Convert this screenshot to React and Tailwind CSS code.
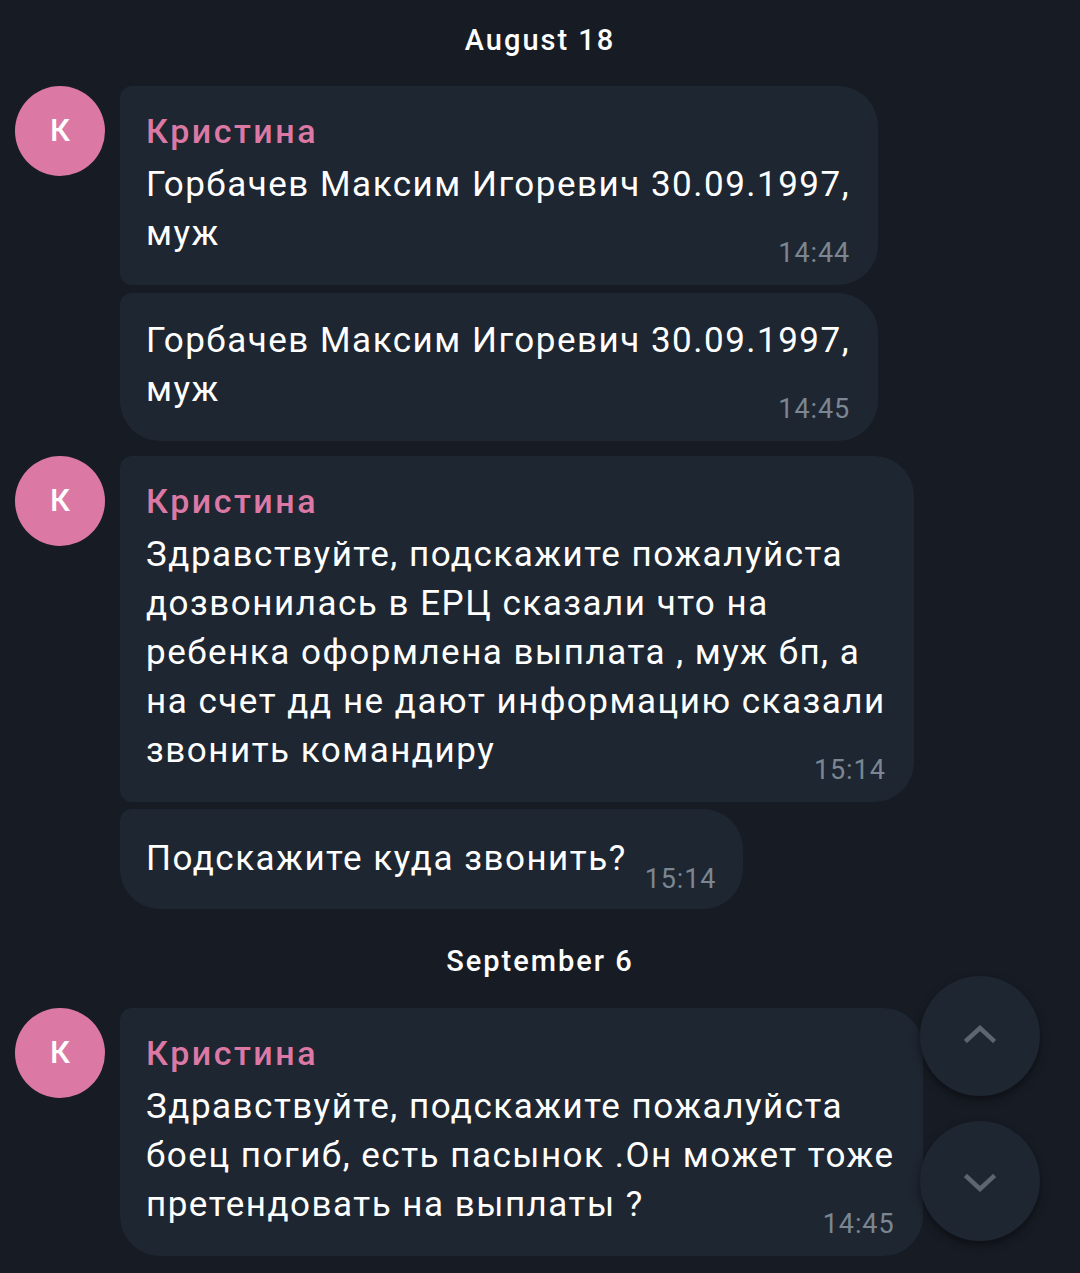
import React from 'react';

const DateLabel = ({ children, className = '' }) => (
  <div className={`flex justify-center text-[29px] tracking-[2px] font-medium text-white leading-[40px] ${className}`}>
    {children}
  </div>
);

const Avatar = () => (
  <div className="w-[90px] h-[90px] rounded-full bg-[#db79a4] flex items-center justify-center text-white text-[31px] font-medium shrink-0">
    К
  </div>
);

const Time = ({ children }) => (
  <span className="text-[27px] tracking-[0.9px] leading-[30px] text-[#7b8692] whitespace-nowrap">{children}</span>
);

// bubble with name/lines and the time tucked under the last line
const Bubble = ({ name, lines, time, last, className = '' }) => (
  <div
    className={`w-fit bg-[#1e2631] rounded-tl-[12px] rounded-tr-[40px] rounded-br-[40px] ${
      last ? 'rounded-bl-[40px]' : 'rounded-bl-[12px]'
    } pl-[26px] pr-[28px] pb-[17px] ${name ? 'pt-[21px]' : 'pt-[23px]'} ${className}`}
  >
    {name && (
      <div className="text-[34px] tracking-[2.5px] leading-[49px] font-medium text-[#db79a4] mb-[4px]">{name}</div>
    )}
    <div className="text-[35px] tracking-[1.5px] leading-[49px] text-white">
      {lines.map((l, i) => (
        <div key={i} className="whitespace-nowrap">{l}</div>
      ))}
    </div>
    <div className="flex justify-end -mt-[20px]">
      <Time>{time}</Time>
    </div>
  </div>
);

const InlineBubble = ({ text, time, last }) => (
  <div
    className={`w-fit bg-[#1e2631] rounded-tl-[12px] rounded-tr-[40px] rounded-br-[40px] ${
      last ? 'rounded-bl-[40px]' : 'rounded-bl-[12px]'
    } pl-[26px] pr-[27px] pt-[25px] pb-[15px] flex items-end gap-[18px]`}
  >
    <span className="text-[35px] tracking-[1.5px] leading-[49px] text-white whitespace-nowrap mb-[11px]">{text}</span>
    <Time>{time}</Time>
  </div>
);

const Chevron = ({ down }) => (
  <svg width="32" height="18" viewBox="0 0 32 18" fill="none">
    <path
      d={down ? 'M3 3 L16 15 L29 3' : 'M3 15 L16 3 L29 15'}
      stroke="#5b6671"
      strokeWidth="4.5"
      strokeLinecap="square"
      strokeLinejoin="miter"
    />
  </svg>
);

export default function App() {
  return (
    <div
      className="relative w-[1080px] h-[1273px] bg-[#171c24] overflow-hidden"
      style={{ fontFamily: 'Roboto, "Noto Sans", sans-serif' }}
    >
      <div className="flex flex-col pt-[20px]">
        <DateLabel>August 18</DateLabel>

        <div className="flex gap-[15px] pl-[15px] mt-[26px]">
          <Avatar />
          <div className="flex flex-col gap-[8px]">
            <Bubble
              name="Кристина"
              lines={['Горбачев Максим Игоревич 30.09.1997,', 'муж']}
              time="14:44"
            />
            <Bubble
              lines={['Горбачев Максим Игоревич 30.09.1997,', 'муж']}
              time="14:45"
              last
            />
          </div>
        </div>

        <div className="flex gap-[15px] pl-[15px] mt-[15px]">
          <Avatar />
          <div className="flex flex-col gap-[7px]">
            <Bubble
              name="Кристина"
              lines={[
                'Здравствуйте, подскажите пожалуйста',
                'дозвонилась в ЕРЦ сказали что на',
                'ребенка оформлена выплата , муж бп, а',
                'на счет дд не дают информацию сказали',
                'звонить командиру',
              ]}
              time="15:14"
            />
            <InlineBubble text="Подскажите куда звонить?" time="15:14" last />
          </div>
        </div>

        <DateLabel className="mt-[32px]">September 6</DateLabel>

        <div className="flex gap-[15px] pl-[15px] mt-[27px]">
          <Avatar />
          <Bubble
            name="Кристина"
            lines={[
              'Здравствуйте, подскажите пожалуйста',
              'боец погиб, есть пасынок .Он может тоже',
              'претендовать на выплаты ?',
            ]}
            time="14:45"
            last
          />
        </div>
      </div>

      {/* floating scroll buttons */}
      <div className="absolute left-[920px] top-[976px] flex flex-col gap-[25px]">
        <button className="w-[120px] h-[120px] rounded-full bg-[#1e2631] shadow-[0_4px_10px_rgba(0,0,0,0.45)] flex items-center justify-center pb-[4px]">
          <Chevron />
        </button>
        <button className="w-[120px] h-[120px] rounded-full bg-[#1e2631] shadow-[0_4px_10px_rgba(0,0,0,0.45)] flex items-center justify-center pt-[4px]">
          <Chevron down />
        </button>
      </div>
    </div>
  );
}
